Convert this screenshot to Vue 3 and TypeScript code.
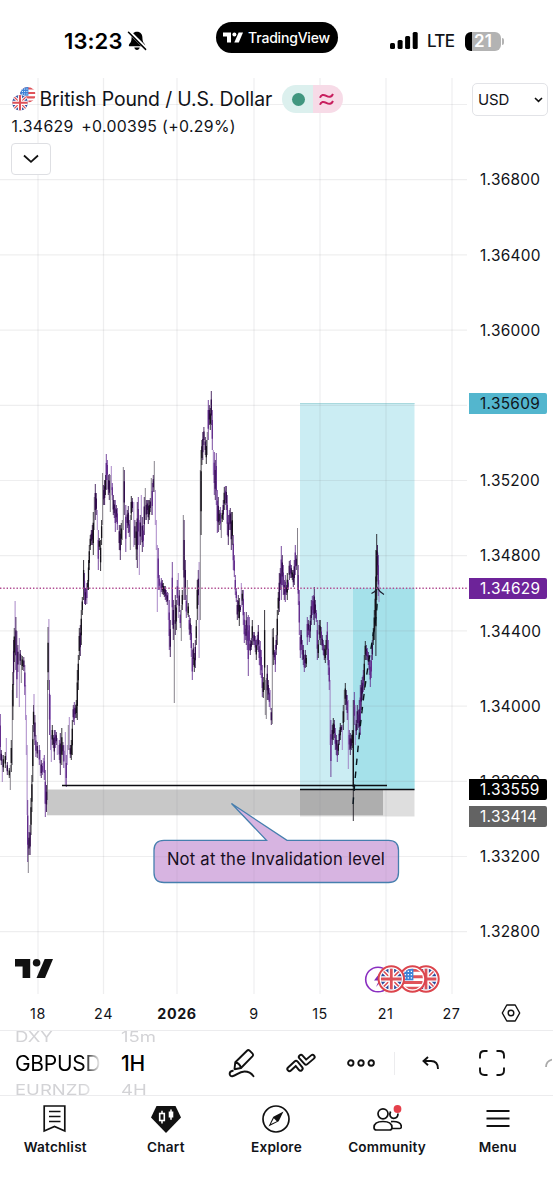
<script setup lang="ts">
type Tone = 'k' | 'd' | 'p' | 'l' | 'g'
interface Bar { x: number; top: number; bottom: number; tone: Tone }
interface Tag { price: string; kind: string }

const verticals: number[] = [38, 103.5, 177, 254, 320, 386, 452]
const horizontals: number[] = Array.from({ length: 12 }, (_, i) => 104.5 + i * 75.2)
const prices: string[] = ['1.36800', '1.36400', '1.36000', '', '1.35200', '1.34800', '1.34400', '1.34000', '1.33600', '1.33200', '1.32800']
const tags: Tag[] = [
  { price: '1.35609', kind: 'target' },
  { price: '1.34629', kind: 'last' },
  { price: '1.33559', kind: 'entry' },
  { price: '1.33414', kind: 'stop' },
]
const dates: string[] = ['18', '24', '2026', '9', '15', '21', '27']

// x, high, low and tone of every traded bar
const series = `0 714 760 p;1 750 765 d;2 755 782 l;3 755 772 k;5 752 768 k;6 738 760 l;7 762 775 d;9 768 778 k;10 765 790 g;11 740 772 k;12 690 765 g;12.6 672 720 k;13.3 640 685 d;14 628 662 k;14.8 601 645 l;15.6 617 670 d;16.6 631 698 p;17.6 645 672 d;19 638 707 l;20 650 665 d;21 655 683 g;22 656 670 k;23.5 657 671 d;24.5 665 695 p;25.3 685 720 l;26 715 755 l;26.8 745 815 l;27.4 800 862 p;28 840 873 g;28.7 832 855 d;29.8 825 855 d;30.7 798 835 k;31.6 775 812 k;32.5 725 782 k;33.2 705 732 k;33.7 694 740 l;34.6 715 745 d;35.6 735 757 p;37 742 758 d;39 745 765 p;40 750 776 l;41 760 778 d;42 763 775 p;43 758 772 l;44 755 780 p;45 770 817 p;46.2 785 812 d;47.2 680 800 g;47.8 627 690 k;48.6 619 680 l;49.2 680 735 p;50.2 695 750 l;51 735 762 l;52 725 745 k;53 735 748 d;54 730 760 d;55 730 748 p;56 732 745 d;57 738 755 l;59 740 760 p;60 733 775 d;61.5 728 765 k;62.6 742 755 d;63.5 745 768 p;65 732 785 l;66 755 787 p;67 745 765 l;68 725 750 g;69 717 750 l;70 745 758 d;71 740 760 k;72 720 755 k;73 705 722 d;74 702 725 p;75 705 718 d;76 700 718 k;77 670 720 k;78 655 690 k;79 628 660 k;80 625 656 d;81 610 645 k;82 597 615 k;83.3 560 600 k;84.2 573 604 p;85.2 588 605 d;86.5 583 604 p;87.5 580 590 k;88.2 560 590 k;89 545 570 k;90 535 550 k;91 530 545 d;92 525 545 d;93 512 555 k;94 497 530 g;95 484 520 d;96 493 515 d;97 510 530 l;98 530 570 p;99 538 550 k;100.3 540 571 k;101.3 520 545 k;102.3 473 525 g;103.3 485 505 d;104.3 480 505 d;105.2 475 495 k;106 454 490 p;107 460 480 p;108 475 495 d;109 474 500 d;110 475 512 g;111 466 490 l;112 483 500 p;113 495 515 d;114 500 518 d;115 500 532 p;116 505 522 d;117 508 530 p;119 525 550 d;120 525 560 d;121 523 545 k;122 520 540 g;123 467 530 g;124 470 515 d;125.5 505 552 p;127 510 528 d;128 506 533 d;129 520 537 p;130 515 550 g;131 496 520 k;132 498 512 d;133.5 502 547 l;134.6 520 545 d;136 522 560 k;137 502 568 d;138 497 545 p;139 520 575 l;140 515 545 d;141 495 540 l;142 517 552 d;143 525 547 p;144 497 535 d;145 488 520 g;146 500 520 d;147 500 514 d;148 500 524 d;149 500 520 k;150 498 512 d;151 478 515 g;152 483 515 p;153 475 492 d;154 461 492 g;155 490 525 l;156 520 550 l;157 545 612 l;158 548 590 p;159 575 590 p;160 583 597 l;161 578 592 p;162 580 594 d;163 583 595 k;164 586 597 d;165 586 600 d;166 590 602 p;167 592 605 d;168 593 620 l;169 600 650 p;170 620 657 d;172 562 625 p;173 600 640 d;174 620 703 g;175 595 635 d;176 600 630 k;177 580 605 p;178 573 618 l;179 590 612 d;180 610 628 p;181 605 641 g;182 590 610 k;183 515 570 g;183.8 520 600 d;185 560 600 d;186 595 618 p;187 580 615 g;188 603 617 k;189 615 635 p;190 618 640 d;191 625 657 p;192 650 680 p;193 643 665 d;194 653 672 k;195 640 668 d;196 620 645 k;197 580 620 k;198 570 605 d;198.8 562 658 l;200 470 620 g;200.8 450 535 k;201.6 440 465 k;202.5 432 460 d;203.6 427 445 d;205 437 455 d;206 440 464 k;207 432 455 g;208 400 440 p;209 405 425 d;210 408 430 k;211 391 425 d;212 410 450 p;213 450 475 l;214 452 495 p;215 460 500 d;216 453 505 p;217 490 533 p;218 497 532 d;219 510 525 k;220 507 530 p;221 515 538 g;222 510 522 k;223 500 520 d;224 487 510 k;225 486 505 p;226 486 510 d;227 495 535 p;228 515 545 d;229 510 530 p;230 508 530 d;231 512 550 d;232 512 545 k;233 535 570 p;234 555 577 p;235 575 595 p;236 588 602 p;237 600 620 d;238 595 618 d;239 598 626 k;240 605 612 d;241 583 607 l;242 590 605 k;243 590 625 p;244 612 643 p;245 625 640 p;246 612 645 d;247 617 650 p;248 615 676 p;249 617 650 p;250 640 655 d;251 638 650 d;252 620 645 k;253 632 645 p;254 632 645 d;255 636 652 p;256 640 660 k;257 635 650 p;258 625 652 d;259 640 665 p;260 641 675 p;261 650 678 p;262 665 697 p;263 677 698 k;264.3 610 690 k;265 680 715 g;266 678 719 g;267 665 700 d;268 680 700 d;269 688 707 p;270 690 710 l;271 708 725 d;272 629 724 g;273 628 665 k;274 650 660 d;275 645 672 p;276 635 655 d;277 610 645 k;278 592 615 k;279 573 612 d;280 568 590 d;281 546 600 p;282 555 585 d;283 565 595 p;284 580 600 d;285 575 602 p;286 585 595 d;287 573 600 k;288 580 590 p;289 561 580 d;290 560 578 p;291 565 578 d;292 570 580 k;293 570 587 d;294 560 585 d;295 545 575 p;296 555 570 d;297.2 528 590 g;298 565 605 p;299 590 635 p;300 630 658 p;301 630 650 d;302 640 660 p;303 645 665 d;304 655 672 p;305 650 668 d;306 655 667 k;307 617 645 p;308 620 635 d;309 625 642 p;310 615 638 d;311 600 625 d;312 596 615 p;313 595 620 p;314 587 625 d;315 600 618 d;316 610 622 p;317 620 660 p;318 640 658 k;319 620 640 d;320 620 645 k;321 627 645 p;322 635 650 d;323 640 655 p;324 645 660 d;325 645 663 k;326 635 655 k;327 622 660 p;328 640 675 p;329 660 690 p;329.8 680 745 l;330.6 720 777 p;332 725 745 d;333 718 740 k;334 720 738 d;335 728 750 p;336 735 755 d;337 740 762 p;338 740 755 k;339 730 745 d;340 723 740 k;341 725 732 d;342 725 750 l;343 705 730 k;344 690 722 g;345 683 705 k;346 690 710 d;347 695 720 p;348 700 769 l;349 730 750 p;350 733 755 d;351 735 750 d;352 730 748 k;353 700 821 k;354 692 725 p;355 705 745 l;356 720 735 d;357 705 730 d;358 710 728 p;359 700 737 d;360 685 735 p;361 680 710 d;362 677 700 d;363 670 692 p;364 655 690 k;365 641 660 k;366 645 660 d;367 648 660 p;368 652 665 d;369 655 675 p;370 660 687 p;371 655 678 p;372 640 660 d;373 628 645 k;374 610 640 k;375 590 625 k;375.6 550 656 k;376.4 534 600 k;377.2 545 575 d;378 555 596 p;378.7 580 602 l`
const bars: Bar[] = series.split(';').map((row) => {
  const [x, top, bottom, tone] = row.split(' ')
  return { x: Number(x) + 0.3, top: Number(top), bottom: Number(bottom), tone: tone as Tone }
})
const thin = (tone: Tone): boolean => tone === 'l' || tone === 'g'
</script>

<template>
  <div class="screen">
    <svg class="defs" width="0" height="0" aria-hidden="true">
      <defs>
        <clipPath id="disc"><circle cx="12" cy="12" r="12" /></clipPath>
        <symbol id="uk" viewBox="0 0 24 24">
          <g clip-path="url(#disc)">
            <rect width="24" height="24" fill="#2c4a9c" />
            <path d="M0 0L24 24M24 0L0 24" stroke="#fff" stroke-width="5" />
            <path d="M0 0L24 24M24 0L0 24" stroke="#dd5058" stroke-width="1.8" />
            <path d="M12 0V24M0 12H24" stroke="#fff" stroke-width="6.500" />
            <path d="M12 0V24M0 12H24" stroke="#dd5058" stroke-width="3.2" />
          </g>
        </symbol>
        <symbol id="us" viewBox="0 0 24 24">
          <g clip-path="url(#disc)">
            <rect width="24" height="24" fill="#fff" />
            <path d="M0 2H24M0 9.3H24M0 16H24M0 22.5H24" stroke="#e0535a" stroke-width="3.4" />
            <rect width="13" height="13.5" fill="#3d83d8" />
            <path d="M3 3.2H12M3 7H12M3 10.8H12" stroke="#fff" stroke-width="1.5" stroke-dasharray="1.5 2" />
          </g>
        </symbol>
        <symbol id="tv" viewBox="0 0 38 19">
          <path d="M0 0H15.2V19H7.6V7.6H0Z" /><circle cx="21.6" cy="3.8" r="3.8" /><path d="M29.7 0H38L30 19H21.5Z" />
        </symbol>
      </defs>
    </svg>

    <header class="status">
      <div class="clock">
        <span>13:23</span>
        <svg width="20" height="20" viewBox="0 0 20 20">
          <path d="M10 .8C6.400 .8 4.700 3.400 4.600 6.500 4.500 10.500 3.600 11.600 2.200 13.200 1.500 14.200 1.800 15.300 3 15.300H17C18.200 15.300 18.500 14.200 17.800 13.200 16.400 11.600 15.500 10.500 15.400 6.500 15.300 3.400 13.600 .8 10 .8ZM7.300 16.500H12.700C12.400 18.100 11.400 19 10 19S7.600 18.100 7.300 16.500Z" fill="#000" />
          <path d="M2 .6L19.500 18.100" stroke="#fff" stroke-width="3.600" />
          <path d="M1.500 1.200L18.600 18.400" stroke="#000" stroke-width="1.500" stroke-linecap="round" />
        </svg>
      </div>
      <div class="island">
        <svg width="20" height="11" fill="#fff"><use href="#tv" /></svg>
        <span>TradingView</span>
      </div>
      <div class="signal">
        <svg width="28" height="18" viewBox="0 0 28 18">
          <rect x="0" y="11" width="5" height="6" rx="1.500" /><rect x="7.600" y="8" width="5" height="9" rx="1.500" />
          <rect x="15.100" y="4" width="5" height="13" rx="1.500" /><rect x="22.700" y="0" width="5" height="17" rx="1.500" />
        </svg>
        <span class="net">LTE</span>
        <div class="battery"><span>21</span></div>
        <i class="nub"></i>
      </div>
    </header>

    <main class="chart">
      <div class="scale"><span v-for="(p, i) in prices" :key="i">{{ p }}</span></div>

      <svg class="plot" width="553" height="952" viewBox="0 78 553 952">
        <rect class="zone-target" x="300" y="403" width="114.500" height="386.500" />
        <rect class="zone-live" x="353" y="588" width="61.500" height="201.500" />
        <path d="M300 403.500H414.500" stroke="#a9d9de" />
        <rect x="47" y="789.500" width="336" height="25.800" fill="#000" fill-opacity=".215" />
        <rect x="300" y="789.500" width="114.500" height="27" fill="#000" fill-opacity=".13" />
        <g class="bars">
          <line v-for="(b, i) in bars" :key="i" :x1="b.x" :x2="b.x" :y1="b.top" :y2="b.bottom" :class="b.tone" stroke-width=".85" />
          <template v-for="(b, i) in bars" :key="'b' + i">
            <line v-if="!thin(b.tone)" :x1="b.x" :x2="b.x" :y1="b.top + (b.bottom - b.top) * 0.25" :y2="b.bottom - (b.bottom - b.top) * 0.28" :class="b.tone" stroke-width="1.300" />
          </template>
        </g>
        <g stroke="#787b86" stroke-opacity=".13" stroke-width="1.200">
          <line v-for="x in verticals" :key="x" :x1="x" :x2="x" y1="78" y2="994" />
          <line v-for="y in horizontals" :key="y" x1="0" x2="467" :y1="y" :y2="y" />
        </g>
        <path d="M62 785.400H387M300 789.400H414.500" stroke="#0c0c12" stroke-width="1.500" />
        <path d="M353 804Q361 706 370 654T376.500 602" fill="none" stroke="#07131b" stroke-width="1.400" stroke-dasharray="6.500 6.500" />
        <path d="M371.500 593.500C374 592.500 376 591 377.500 588C379 591 381 593 384 594.500" fill="none" stroke="#1b1b2c" stroke-width="1.300" />
        <path d="M0 588.200H467" stroke="#b04c91" stroke-width="1.400" stroke-dasharray="1.400 1.900" />
        <path class="bubble" d="M164 840.300H266.500L231.500 803.500L287 840.300H388.500Q398.500 840.300 398.500 850.300V872.500Q398.500 882.500 388.500 882.500H164Q154 882.500 154 872.500V850.300Q154 840.300 164 840.300Z" />
        <path d="M177 841V882M254 841V882M320 841V882M386 841V882M155 856.700H398" stroke="#000" stroke-opacity=".045" />
        <svg x="15" y="959" width="38" height="19" fill="#111"><use href="#tv" /></svg>
        <g fill="#fff" stroke-width="2">
          <circle cx="378" cy="979.500" r="12.300" stroke="#8a2fc0" stroke-width="1.600" />
          <path d="M380.500 972L374 980.500H379L376 987L383 979" fill="#7d2ab5" />
          <circle cx="426" cy="979" r="12.700" stroke="#dc454d" />
        </g>
        <use href="#uk" x="415.500" y="968.500" width="21" height="21" />
        <circle cx="412.500" cy="979" r="12.700" fill="#fff" stroke="#dc454d" stroke-width="2" />
        <use href="#us" x="402" y="968.500" width="21" height="21" />
        <circle cx="391.300" cy="979" r="12.700" fill="#fff" stroke="#dc454d" stroke-width="2" />
        <use href="#uk" x="380.800" y="968.500" width="21" height="21" />
      </svg>

      <div class="symbol">
        <div class="title-row">
          <svg class="pair" width="24" height="24">
            <use href="#us" x="8" y="0" width="15.500" height="15.500" />
            <circle cx="8" cy="15.800" r="8.600" fill="#fff" />
            <use href="#uk" x=".2" y="8" width="15.600" height="15.600" />
          </svg>
          <h1>British Pound / U.S. Dollar</h1>
          <div class="pill">
            <span class="open"><i></i></span>
            <span class="delay">
              <svg width="15" height="13" viewBox="0 0 15 13" fill="none" stroke="#c8205f" stroke-width="2">
                <path d="M1 4.800C2 1.500 4.500 1.300 7.300 2.900S12.500 4.300 14 1M1 11.800C2 8.500 4.500 8.300 7.300 9.900S12.500 11.300 14 8" />
              </svg>
            </span>
          </div>
        </div>
        <p class="quote"><span>1.34629</span><span>+0.00395 (+0.29%)</span></p>
        <button class="expand">
          <svg width="16" height="10" viewBox="0 0 16 10" fill="none" stroke="#111" stroke-width="1.800"><path d="M1 1.500L8 7.800L15 1.500" /></svg>
        </button>
      </div>

      <div class="currency">
        <span>USD</span>
        <svg width="9" height="6" viewBox="0 0 9 6" fill="none" stroke="#111" stroke-width="1.600"><path d="M1 1L4.500 4.300L8 1" /></svg>
      </div>

      <div v-for="t in tags" :key="t.kind" class="tag" :class="t.kind">{{ t.price }}</div>
      <div class="note">Not at the Invalidation level</div>

      <div class="dates">
        <span v-for="d in dates" :key="d" :class="{ year: d === '2026' }">{{ d }}</span>
        <span>
          <svg width="20" height="18" viewBox="0 0 20 18" fill="none" stroke="#111" stroke-width="1.400"><path d="M5.800 1H14.200L18.700 9L14.200 17H5.800L1.300 9Z" stroke-linejoin="round" /><circle cx="10" cy="9" r="2.800" /></svg>
        </span>
      </div>
    </main>

    <section class="toolbar">
      <div class="wheel pairs"><span class="ghost">DXY</span><strong>GBPUSD</strong><span class="ghost">EURNZD</span></div>
      <div class="wheel frames"><span class="ghost">15m</span><strong>1H</strong><span class="ghost">4H</span></div>
      <div class="tool">
        <svg width="28" height="30" viewBox="0 0 28 30" fill="none" stroke="#111" stroke-width="1.900" stroke-linejoin="round" stroke-linecap="round">
          <path d="M7.300 14.200L19 2.700Q20.300 1.500 21.600 2.700L24.600 5.700Q25.700 7 24.600 8.200L13 20L6.500 21.200ZM7.300 14.200Q11.800 15.200 13 20" />
          <path d="M4.800 22.800C.5 23.400 .8 28.500 4.400 28.200C8.500 27.800 10.500 23.500 16.500 23.500C21 23.500 23.600 25.500 25.500 28.200" />
        </svg>
      </div>
      <div class="tool">
        <svg width="32" height="22" viewBox="0 0 32 22" stroke-linejoin="round" stroke-linecap="round" fill="none">
          <path d="M4.500 17L11 11L15.500 16.500" stroke="#111" stroke-width="6.200" /><path d="M4.500 17L11 11L15.500 16.500" stroke="#fff" stroke-width="2.300" />
          <path d="M16 5L21 10.500L27.500 5" stroke="#111" stroke-width="6.200" /><path d="M16 5L21 10.500L27.500 5" stroke="#fff" stroke-width="2.300" />
        </svg>
      </div>
      <div class="tool dots">
        <svg width="28" height="8" viewBox="0 0 28 8" fill="none" stroke="#111" stroke-width="1.900"><circle cx="3.800" cy="4" r="2.700" /><circle cx="14" cy="4" r="2.700" /><circle cx="24.200" cy="4" r="2.700" /></svg>
      </div>
      <i class="rule"></i>
      <div class="tool undo">
        <svg width="18" height="14" viewBox="0 0 18 14" fill="none" stroke="#111" stroke-width="1.900"><path d="M6 1L1.500 5L6 9.200M1.500 5H9Q16 5 16 13" /></svg>
      </div>
      <div class="tool">
        <svg width="26" height="26" viewBox="0 0 26 26" fill="none" stroke="#111" stroke-width="1.900"><path d="M1 8.500V5.500Q1 1 5.500 1H8.500M17.500 1H20.500Q25 1 25 5.500V8.500M25 17.500V20.500Q25 25 20.500 25H17.500M8.500 25H5.500Q1 25 1 20.500V17.500" /></svg>
      </div>
      <div class="tool edge">
        <svg width="7" height="10" viewBox="0 0 7 10" fill="none" stroke="#aaa" stroke-width="1.800"><path d="M1 9Q1 3 7 1.500" /></svg>
      </div>
    </section>

    <nav class="tabs">
      <a>
        <svg width="30" height="28" viewBox="0 0 30 28" fill="none" stroke="#111" stroke-width="1.700"><path d="M4.200 1H24.800V26L14.500 21.500L4.200 26ZM9 6.500H20.500M9 11.500H20.500M9 16.500H20.500" /></svg>
        <span>Watchlist</span>
      </a>
      <a>
        <svg width="30" height="28" viewBox="0 0 30 28"><path d="M5.500 1H24.500L30 12.500L15 28L0 12.500Z" fill="#111" /><path d="M11 5.800V8.500M11 15.500V18.500M20 4.500V14.800" stroke="#fff" stroke-width="1.500" /><rect x="8.700" y="8.500" width="4.600" height="7" fill="none" stroke="#fff" stroke-width="1.600" /><rect x="17.700" y="6.500" width="4.600" height="6" fill="#fff" /></svg>
        <span>Chart</span>
      </a>
      <a>
        <svg width="30" height="28" viewBox="0 0 30 28"><circle cx="15" cy="14" r="13" fill="none" stroke="#111" stroke-width="1.700" /><path d="M22.500 6.500L12.300 11.700L7.500 21.500L17.700 16.200Z" fill="#111" /><path d="M12.800 13.200L9.900 19.100L15.800 16.200" fill="#fff" /></svg>
        <span>Explore</span>
      </a>
      <a>
        <svg width="30" height="28" viewBox="0 0 30 28" fill="none" stroke="#111" stroke-width="1.700">
          <circle cx="11" cy="8.800" r="5" /><path d="M18.600 6.500C16.800 10 18.500 13.200 21.500 13.300C24.500 13.300 26 11 26 8.500" />
          <path d="M2 22.500C2 18 5.500 16.500 11 16.500S20 18 20 22.500Q20 25 17.500 25H4.500Q2 25 2 22.500ZM19 16.600C25.500 16 29.300 18 29.300 21.500Q29.500 23.500 27.500 23.500H20" />
          <circle cx="25.500" cy="4" r="3.900" fill="#e5404b" stroke="none" />
        </svg>
        <span>Community</span>
      </a>
      <a>
        <svg width="30" height="28" viewBox="0 0 30 28" stroke="#111" stroke-width="1.900"><path d="M3.500 6H26.500M3.500 13.500H26.500M3.500 21H26.500" /></svg>
        <span>Menu</span>
      </a>
    </nav>
  </div>
</template>

<style>
body { background: #fff; }
</style>

<style scoped>
.screen { width: 553px; height: 1200px; overflow: hidden; display: flex; flex-direction: column; background: #fff; color: #111318; font-family: Inter, "Liberation Sans", sans-serif; }
.screen svg { display: block; flex: none; }
.screen .defs { position: absolute; }
.status { height: 78px; display: flex; align-items: flex-start; flex: none; }
.clock { box-sizing: border-box; width: 215.5px; padding: 28px 0 0 64px; display: flex; gap: 4px; color: #000; font-weight: 600; font-size: 22px; line-height: 26px; letter-spacing: .1px; }
.clock svg { margin-top: 3px; }
.island { margin-top: 21.5px; width: 122px; height: 31px; border-radius: 16px; background: #000; color: #fff; display: flex; align-items: center; justify-content: center; gap: 5px; font-size: 14px; font-weight: 500; letter-spacing: -.2px; flex: none; }
.signal { display: flex; align-items: center; margin-left: 52.5px; height: 26px; margin-top: 28px; }
.net { margin-left: 9px; width: 38px; font-size: 17px; font-weight: 500; letter-spacing: -.7px; }
.battery { width: 36px; height: 19px; border-radius: 6px; background: linear-gradient(90deg, #000 0 7px, #b3b3b3 7px); color: #fff; font-size: 17px; font-weight: 600; line-height: 19px; text-align: center; }
.nub { width: 2px; height: 7px; border-radius: 0 3px 3px 0; background: #b3b3b3; margin-left: 1px; }
.chart { position: relative; height: 952px; flex: none; }
.plot { position: absolute; inset: 0; }
.zone-target { fill: #cbedf3; }
.zone-live { fill: #a5e1ea; }
.bubble { fill: #d7b4e1; stroke: #467fae; stroke-width: 1.3; }
.k { stroke: #141018; }
.d { stroke: #300b4b; }
.p { stroke: #612b8c; }
.l { stroke: #9a72bd; }
.g { stroke: #716d76; }
.symbol { position: absolute; left: 10.5px; top: 7px; display: flex; flex-direction: column; align-items: flex-start; }
.title-row { display: flex; align-items: center; height: 28px; }
.pair { margin-left: 1px; }
h1 { margin: 0 0 0 4px; width: 242px; font-size: 19.4px; font-weight: 400; letter-spacing: -.12px; white-space: nowrap; }
.pill { display: flex; height: 28px; width: 61px; border-radius: 14px; overflow: hidden; }
.open { width: 31px; background: #dcf0ee; display: flex; align-items: center; justify-content: center; }
.open i { width: 13px; height: 13px; border-radius: 50%; background: #41967f; margin-left: 2px; }
.delay { flex: 1; background: #f7dbe7; display: flex; align-items: center; justify-content: center; padding-right: 3px; }
.quote { margin: 3px 0 0 1px; height: 22px; line-height: 22px; font-size: 15.8px; letter-spacing: .35px; display: flex; gap: 7.5px; white-space: nowrap; }
.expand { margin: 5px 0 0; padding: 0; width: 40px; height: 32px; border: 1.5px solid #dedfe3; border-radius: 4px; background: #fff; display: flex; align-items: center; justify-content: center; }
.currency { position: absolute; left: 472px; top: 5px; box-sizing: border-box; width: 76px; height: 33px; border: 1.5px solid #e2e3e7; border-radius: 5px; background: #fff; display: flex; align-items: center; justify-content: space-between; padding: 0 4px 0 5px; font-size: 15px; letter-spacing: -.1px; }
.scale { position: absolute; left: 469px; top: 64.4px; width: 78px; display: grid; grid-auto-rows: 75.2px; align-items: center; }
.scale span, .tag { font-size: 15.4px; letter-spacing: .3px; padding-left: 11px; white-space: nowrap; }
.tag { position: absolute; left: 469px; box-sizing: border-box; width: 78px; height: 21px; line-height: 22px; border-radius: 0 2px 2px 0; color: #fff; }
.target { top: 315px; background: #53b6ce; color: #10151b; }
.last { top: 500px; background: #6d2399; }
.entry { top: 701px; background: #000; }
.stop { top: 728px; background: #636363; }
.note { position: absolute; left: 154px; top: 761px; width: 244px; height: 42px; line-height: 40px; text-align: center; font-size: 16.6px; letter-spacing: .23px; white-space: nowrap; color: #170e22; }
.dates { position: absolute; left: 5px; bottom: 6px; display: grid; grid-template-columns: 66px 65px 82px 72px 60px 71px 61px 58px; height: 22px; align-items: center; font-size: 14.3px; letter-spacing: .6px; }
.dates span { display: flex; justify-content: center; }
.dates .year { font-weight: 700; }
.toolbar { box-sizing: border-box; height: 66px; flex: none; display: grid; grid-template-columns: 15px 86px 16px 92px 65px 54px 66px 2px 69px 53px 34px; align-items: center; border-top: 1px solid #ececee; border-bottom: 1px solid #ececee; overflow: hidden; }
.wheel { height: 64px; overflow: hidden; display: flex; flex-direction: column; justify-content: space-between; align-items: flex-start; }
.wheel.pairs { grid-column: 2; -webkit-mask-image: linear-gradient(90deg, #000 68px, transparent 86px); mask-image: linear-gradient(90deg, #000 68px, transparent 86px); }
.wheel.frames { grid-column: 4; padding-left: 4px; }
.wheel strong { font-size: 21px; font-weight: 400; line-height: 26px; color: #000; letter-spacing: -.3px; padding-top: 1px; }
.frames strong { font-weight: 500; }
.ghost { font-size: 18.5px; line-height: 12px; color: #d3d3d6; transform: scaleY(.78); }
.ghost:last-child { position: relative; top: 1px; }
.tool { display: flex; align-items: center; justify-content: center; }
.dots { padding-right: 1px; }
.rule { width: 1px; height: 23px; background: #ececee; }
.edge { justify-content: flex-end; }
.tabs { display: grid; grid-template-columns: repeat(5, 1fr); padding-top: 9px; }
.tabs a { display: flex; flex-direction: column; align-items: center; font-size: 13.6px; font-weight: 600; letter-spacing: .2px; }
.tabs span { margin-top: 6px; line-height: 17px; }
</style>
